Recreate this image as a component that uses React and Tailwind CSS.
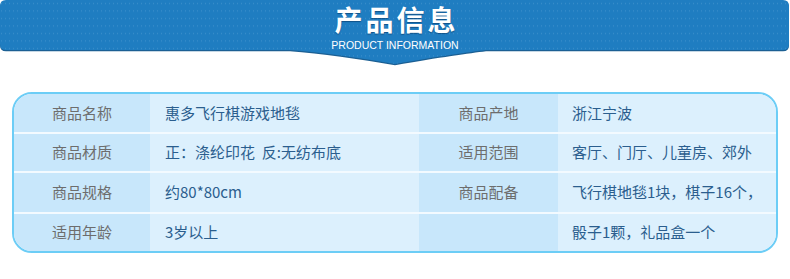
import React from "react";

const rows = [
  ["商品名称", "惠多飞行棋游戏地毯", "商品产地", "浙江宁波", "h-[38px]"],
  ["商品材质", "正：涤纶印花  反:无纺布底", "适用范围", "客厅、门厅、儿童房、郊外", "h-[37px]"],
  ["商品规格", "约80*80cm", "商品配备", "飞行棋地毯1块，棋子16个，", "h-[39px]"],
  ["适用年龄", "3岁以上", "", "骰子1颗，礼品盒一个", "h-[37px]"],
];

function Header() {
  const shape =
    "M6,0 H783 Q789,0 789,6 V44 Q789,50 783,50 H486 C470,52 440,56 395,64 C360,58 320,52 290,50 H6 Q0,50 0,44 V6 Q0,0 6,0 Z";
  return (
    <div className="relative h-[70px] w-[790px]">
      <svg className="absolute inset-0" width="790" height="70" viewBox="0 0 790 70">
        <defs>
          <pattern id="dots" width="4" height="7.5" patternUnits="userSpaceOnUse">
            <rect x="1" y="3" width="1" height="1" fill="#5aa3d6" opacity="0.55" />
          </pattern>
        </defs>
        <path d={shape} transform="translate(0,1.2)" fill="#1b5f93" />
        <path d={shape} fill="#1f7dc1" />
        <path d={shape} fill="url(#dots)" />
      </svg>
      <div className="relative flex flex-col items-center pt-[5px]">
        <div
          className="text-[28px] leading-none font-bold tracking-[3px] text-white pl-[3px] [text-shadow:0_1px_1px_rgba(0,40,80,0.5)]"
          style={{ fontFamily: '"Noto Sans CJK SC", "Noto Sans", sans-serif' }}
        >
          产品信息
        </div>
        <div
          className="mt-[7px] text-[10.5px] leading-none text-white"
          style={{ fontFamily: '"Liberation Sans", Arial, sans-serif' }}
        >
          PRODUCT INFORMATION
        </div>
      </div>
    </div>
  );
}

export default function App() {
  return (
    <div
      className="w-[790px] h-[279px] bg-white overflow-hidden"
      style={{ fontFamily: '"Noto Sans CJK SC", "Noto Sans", sans-serif' }}
    >
      <Header />
      <div className="mx-[12px] mt-[22px] w-[766px] rounded-[20px] border-2 border-[#6ccdf6] overflow-hidden bg-[#f3faff] flex flex-col gap-[2px]">
        {rows.map(([l1, v1, l2, v2, h], i) => (
          <div key={i} className={`grid grid-cols-[136px_269px_139px_218px] ${h}`}>
            <div className="bg-[#c8e7fb] flex items-center justify-center text-[15px] text-[#6d6d6d]">{l1}</div>
            <div className="bg-[#dcf0fd] flex items-center pl-[15px] text-[15px] text-[#2b5e8e] whitespace-pre">{v1}</div>
            <div className="bg-[#c8e7fb] flex items-center justify-center text-[15px] text-[#6d6d6d]">{l2}</div>
            <div className="bg-[#dcf0fd] flex items-center pl-[14px] text-[15px] text-[#2b5e8e] whitespace-pre">{v2}</div>
          </div>
        ))}
      </div>
    </div>
  );
}
